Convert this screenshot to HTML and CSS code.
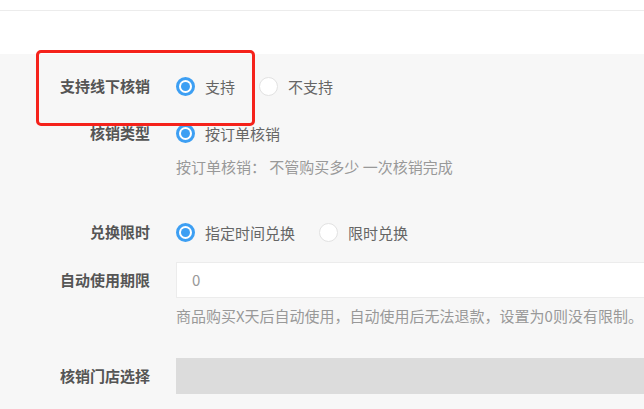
FILE: index.html
```html
<!DOCTYPE html>
<html lang="zh-CN">
<head>
<meta charset="utf-8">
<title>核销设置</title>
<link rel="stylesheet" href="styles.css">
</head>
<body>
<div class="page">
  <div class="top">
    <div class="top-bar"></div>
  </div>
  <div class="panel">
    <div class="field f1">
      <div class="label">支持线下核销</div>
      <div class="control radios">
        <span class="radio-item"><span class="radio checked"></span><span class="rtext">支持</span></span>
        <span class="radio-item"><span class="radio"></span><span class="rtext">不支持</span></span>
      </div>
    </div>
    <div class="field f2">
      <div class="label">核销类型</div>
      <div class="control radios">
        <span class="radio-item"><span class="radio checked"></span><span class="rtext">按订单核销</span></span>
      </div>
      <div class="hint h1">按订单核销： 不管购买多少 一次核销完成</div>
    </div>
    <div class="field f3">
      <div class="label">兑换限时</div>
      <div class="control radios">
        <span class="radio-item"><span class="radio checked"></span><span class="rtext">指定时间兑换</span></span>
        <span class="radio-item"><span class="radio"></span><span class="rtext">限时兑换</span></span>
      </div>
    </div>
    <div class="field f4">
      <div class="label">自动使用期限</div>
      <div class="control"><div class="input">0</div></div>
      <div class="hint h2">商品购买X天后自动使用，自动使用后无法退款，设置为0则没有限制。</div>
    </div>
    <div class="field f5">
      <div class="label">核销门店选择</div>
      <div class="control"><div class="select"></div></div>
    </div>
    <div class="mark"></div>
  </div>
</div>
</body>
</html>
```
FILE: styles.css
```css
html, body {
  margin: 0;
  padding: 0;
  overflow: hidden;
}
body {
  font-family: "Noto Sans CJK SC", "Noto Sans", sans-serif;
  font-size: 15px;
  background: #f7f7f7;
  width: 644px;
  height: 409px;
}
.page {
  width: 644px;
}
.top {
  height: 54px;
  background: #fff;
}
.top-bar {
  height: 10px;
  border-bottom: 1px solid #ececec;
}
.panel {
  position: relative;
  background: #f7f7f7;
  padding-top: 14px;
  height: 341px;
}
.field {
  display: grid;
  grid-template-columns: 150px 1fr;
  column-gap: 26px;
  align-items: center;
}
.label {
  text-align: right;
  font-weight: 700;
  color: #555;
  height: 36px;
  line-height: 36px;
}
.control {
  height: 36px;
  display: flex;
  align-items: center;
}
.radios {
  gap: 24px;
}
.radio-item {
  display: flex;
  align-items: center;
  gap: 10px;
  color: #666;
}
.radio {
  width: 19px;
  height: 19px;
  box-sizing: border-box;
  border-radius: 50%;
  background: #fff;
  border: 1px solid #e2e2e2;
  display: flex;
  align-items: center;
  justify-content: center;
}
.radio.checked {
  border: 3px solid #3d9ff3;
}
.radio.checked::after {
  content: "";
  width: 9px;
  height: 9px;
  border-radius: 50%;
  background: #3d9ff3;
}
.hint {
  grid-column: 2;
  color: #999;
  line-height: 20px;
  white-space: nowrap;
}
.h1 { margin-top: 6px; }
.h2 { margin-top: 8px; }
.f2 { margin-top: 11px; }
.f3 { margin-top: 37px; }
.f4 { margin-top: 12px; }
.f5 { margin-top: 32px; }
.input {
  box-sizing: border-box;
  width: 100%;
  height: 36px;
  background: #fff;
  border: 1px solid #ececec;
  border-right: none;
  padding-left: 15px;
  line-height: 34px;
  color: #999;
}
.select {
  width: 100%;
  height: 36px;
  background: #dcdcdc;
}
.mark {
  position: absolute;
  left: 36px;
  top: -4px;
  width: 219px;
  height: 76px;
  box-sizing: border-box;
  border: 3px solid #f5221b;
  border-radius: 5px;
}
```
